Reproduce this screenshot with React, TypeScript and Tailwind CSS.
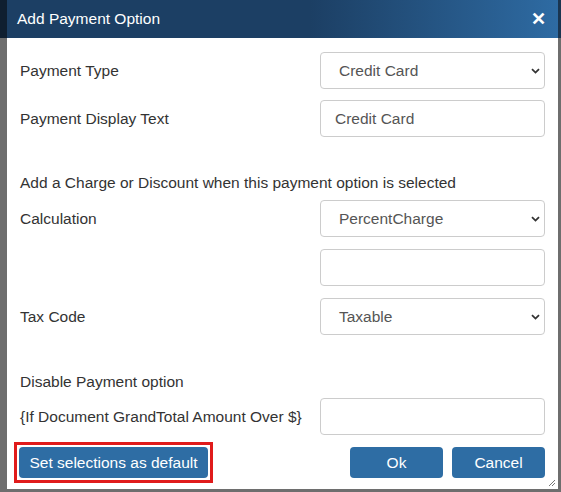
import React from "react";

const font = { fontFamily: '"Liberation Sans", Arial, sans-serif' };

function Chevron() {
  return (
    <svg width="9" height="6" viewBox="0 0 9 6" className="absolute right-[4px] top-1/2 -translate-y-1/2">
      <path d="M1 1.2 L4.5 4.6 L8 1.2" fill="none" stroke="#333" strokeWidth="1.8" />
    </svg>
  );
}

function SelectBox({ value }: { value: string }) {
  return (
    <div className="relative w-[225px] h-[37px] border border-[#cccccc] rounded-[4px] bg-white flex items-center pl-[18px] text-[15.5px] text-[#555]">
      {value}
      <Chevron />
    </div>
  );
}

function InputBox({ value }: { value?: string }) {
  return (
    <div className="w-[225px] h-[37px] border border-[#cccccc] rounded-[4px] bg-white flex items-center pl-[14px] text-[15.5px] text-[#555]">
      {value}
    </div>
  );
}

function Row({ label, children }: { label?: string; children: React.ReactNode }) {
  return (
    <div className="flex items-center justify-between h-[37px]">
      <div className="text-[15.5px] text-[#333]">{label}</div>
      {children}
    </div>
  );
}

export default function App() {
  return (
    <div className="w-[561px] h-[492px] relative bg-[#6e6e6e] overflow-hidden" style={font}>
      <div className="absolute left-0 top-0 w-[7px] h-[38px] bg-[#0f1f30]" />
      <div className="absolute right-0 top-0 w-[3px] h-[38px] bg-[#1a3550]" />
      <div className="absolute left-[7px] top-0 w-[551px] h-[489px] bg-white flex flex-col">
        <div className="h-[38px] flex items-center justify-between pl-[10px] pr-[12px] bg-gradient-to-r from-[#1c3f64] from-[55%] to-[#2e6ba3] text-white">
          <span className="text-[15.5px]">Add Payment Option</span>
          <span className="text-[18px] font-bold leading-none">✕</span>
        </div>
        <div className="flex flex-col pl-[13px] pr-[13px] pt-[14px]">
          <Row label="Payment Type"><SelectBox value="Credit Card" /></Row>
          <div className="h-[11px]" />
          <Row label="Payment Display Text"><InputBox value="Credit Card" /></Row>
          <div className="h-[37px]" />
          <div className="text-[15.5px] text-[#333] h-[18px] leading-[18px]">Add a Charge or Discount when this payment option is selected</div>
          <div className="h-[8px]" />
          <Row label="Calculation"><SelectBox value="PercentCharge" /></Row>
          <div className="h-[12px]" />
          <Row><InputBox /></Row>
          <div className="h-[12px]" />
          <Row label="Tax Code"><SelectBox value="Taxable" /></Row>
          <div className="h-[38px]" />
          <div className="text-[15.5px] text-[#333] h-[18px] leading-[18px]">Disable Payment option</div>
          <div className="h-[7px]" />
          <Row label="{If Document GrandTotal Amount Over $}"><InputBox /></Row>
          <div className="h-[7px]" />
          <div className="flex items-center justify-between">
            <div className="border-[3px] border-[#e01b1b] p-[2px] -ml-[6px]">
              <button className="h-[31px] w-[189px] rounded-[4px] bg-[#2e6da4] text-white text-[15.5px]">Set selections as default</button>
            </div>
            <div className="flex gap-[9px]">
              <button className="h-[31px] w-[93px] rounded-[4px] bg-[#2e6da4] text-white text-[15.5px]">Ok</button>
              <button className="h-[31px] w-[93px] rounded-[4px] bg-[#2e6da4] text-white text-[15.5px]">Cancel</button>
            </div>
          </div>
        </div>
        <svg width="8" height="8" viewBox="0 0 8 8" className="absolute right-[2px] bottom-[2px]">
          <path d="M7 1 L1 7 M7 4 L4 7" stroke="#777" strokeWidth="1" />
        </svg>
      </div>
    </div>
  );
}
